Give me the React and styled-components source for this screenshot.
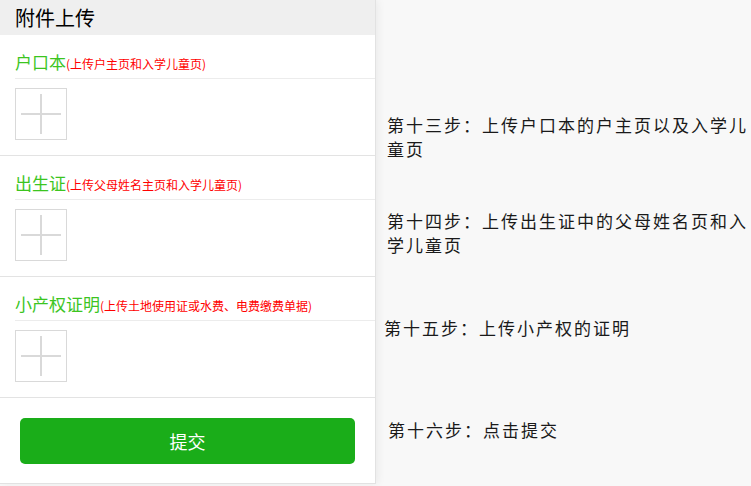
import React from 'react';
import styled, { createGlobalStyle } from 'styled-components';

const GlobalStyle = createGlobalStyle`
  body {
    margin: 0;
    background: #f8f8f8;
    font-family: "Noto Sans CJK SC", "Liberation Sans", sans-serif;
  }
`;

const Page = styled.div`
  display: flex;
  align-items: flex-start;
  width: 751px;
  height: 486px;
  overflow: hidden;
`;

const Panel = styled.section`
  width: 375px;
  height: 483px;
  background: #fff;
  border-right: 1px solid #e2e2e2;
  border-bottom: 1px solid #e2e2e2;
  box-shadow: 2px 0 8px rgba(0, 0, 0, 0.06);
  flex-shrink: 0;
`;

const Header = styled.h1`
  margin: 0;
  height: 35px;
  padding-left: 15px;
  background: #efefef;
  color: #000;
  font-size: 20px;
  font-weight: normal;
  line-height: 35px;
`;

const Section = styled.div`
  border-bottom: 1px solid #e3e3e3;
`;

const TitleRow = styled.div`
  display: flex;
  align-items: baseline;
  height: 20px;
  margin-left: 15px;
  padding: 17px 0 6px;
  line-height: 20px;
  border-bottom: 1px solid #ececec;
  white-space: nowrap;
`;

const Name = styled.span`
  color: #3cc51f;
  font-size: 17px;
`;

const Hint = styled.span`
  color: #ff0000;
  font-size: 12px;
`;

const UploadRow = styled.div`
  padding: 9px 15px 15px;
`;

const UploadBox = styled.div`
  position: relative;
  width: 50px;
  height: 50px;
  border: 1px solid #d9d9d9;

  &::before,
  &::after {
    content: '';
    position: absolute;
    background: #d9d9d9;
  }

  &::before {
    left: 5px;
    top: 24px;
    width: 40px;
    height: 2px;
  }

  &::after {
    top: 5px;
    left: 24px;
    width: 2px;
    height: 40px;
  }
`;

const Footer = styled.div`
  padding: 20px 20px;
`;

const SubmitButton = styled.button`
  display: block;
  width: 100%;
  height: 46px;
  border: none;
  border-radius: 5px;
  background: #1aad19;
  color: #fff;
  font-family: inherit;
  font-size: 18px;
  cursor: pointer;
`;

const Notes = styled.div`
  display: flex;
  flex-direction: column;
  flex: 1;
`;

const Note = styled.p`
  margin: ${p => p.top}px 0 0;
  padding-left: ${p => p.indent}px;
  color: #1a1a1a;
  font-size: 17px;
  line-height: 24px;
  letter-spacing: 2px;
`;

const sections = [
  { name: '户口本', hint: '(上传户主页和入学儿童页)' },
  { name: '出生证', hint: '(上传父母姓名主页和入学儿童页)' },
  { name: '小产权证明', hint: '(上传土地使用证或水费、电费缴费单据)' },
];

const notes = [
  { top: 113, indent: 11, text: '第十三步：上传户口本的户主页以及入学儿童页' },
  { top: 48, indent: 11, text: '第十四步：上传出生证中的父母姓名页和入学儿童页' },
  { top: 59, indent: 8, text: '第十五步：上传小产权的证明' },
  { top: 78, indent: 12, text: '第十六步：点击提交' },
];

const App = () => (
  <>
    <GlobalStyle />
    <Page>
      <Panel>
        <Header>附件上传</Header>
        {sections.map(s => (
          <Section key={s.name}>
            <TitleRow>
              <Name>{s.name}</Name>
              <Hint>{s.hint}</Hint>
            </TitleRow>
            <UploadRow>
              <UploadBox />
            </UploadRow>
          </Section>
        ))}
        <Footer>
          <SubmitButton>提交</SubmitButton>
        </Footer>
      </Panel>
      <Notes>
        {notes.map(n => (
          <Note key={n.text} top={n.top} indent={n.indent}>{n.text}</Note>
        ))}
      </Notes>
    </Page>
  </>
);

export default App;
